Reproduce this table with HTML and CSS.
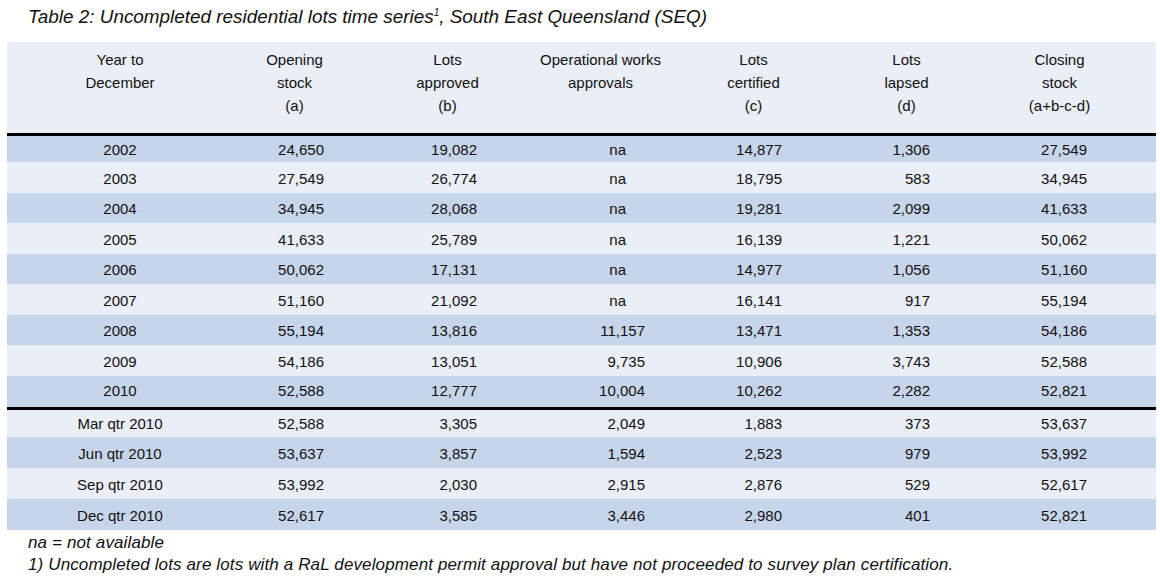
FILE: index.html
```html
<!DOCTYPE html>
<html>
<head>
<meta charset="utf-8">
<link rel="stylesheet" href="styles.css">
</head>
<body>
<div class="page">
  <p class="title">Table 2: Uncompleted residential lots time series<sup>1</sup>, South East Queensland (SEQ)</p>
  <table class="lots">
    <colgroup>
      <col class="c1"><col class="cn"><col class="cn"><col class="cn"><col class="cn"><col class="cn"><col class="c7">
    </colgroup>
    <thead>
      <tr>
        <th>Year to<br>December</th>
        <th>Opening<br>stock<br>(a)</th>
        <th>Lots<br>approved<br>(b)</th>
        <th>Operational works<br>approvals</th>
        <th>Lots<br>certified<br>(c)</th>
        <th>Lots<br>lapsed<br>(d)</th>
        <th>Closing<br>stock<br>(a+b-c-d)</th>
      </tr>
    </thead>
    <tbody>
      <tr class="dark first"><td>2002</td><td>24,650</td><td>19,082</td><td class="na">na</td><td>14,877</td><td>1,306</td><td>27,549</td></tr>
      <tr class="light"><td>2003</td><td>27,549</td><td>26,774</td><td class="na">na</td><td>18,795</td><td>583</td><td>34,945</td></tr>
      <tr class="dark"><td>2004</td><td>34,945</td><td>28,068</td><td class="na">na</td><td>19,281</td><td>2,099</td><td>41,633</td></tr>
      <tr class="light"><td>2005</td><td>41,633</td><td>25,789</td><td class="na">na</td><td>16,139</td><td>1,221</td><td>50,062</td></tr>
      <tr class="dark"><td>2006</td><td>50,062</td><td>17,131</td><td class="na">na</td><td>14,977</td><td>1,056</td><td>51,160</td></tr>
      <tr class="light"><td>2007</td><td>51,160</td><td>21,092</td><td class="na">na</td><td>16,141</td><td>917</td><td>55,194</td></tr>
      <tr class="dark"><td>2008</td><td>55,194</td><td>13,816</td><td>11,157</td><td>13,471</td><td>1,353</td><td>54,186</td></tr>
      <tr class="light"><td>2009</td><td>54,186</td><td>13,051</td><td>9,735</td><td>10,906</td><td>3,743</td><td>52,588</td></tr>
      <tr class="dark split"><td>2010</td><td>52,588</td><td>12,777</td><td>10,004</td><td>10,262</td><td>2,282</td><td>52,821</td></tr>
      <tr class="light after-split"><td>Mar qtr 2010</td><td>52,588</td><td>3,305</td><td>2,049</td><td>1,883</td><td>373</td><td>53,637</td></tr>
      <tr class="dark tall"><td>Jun qtr 2010</td><td>53,637</td><td>3,857</td><td>1,594</td><td>2,523</td><td>979</td><td>53,992</td></tr>
      <tr class="light"><td>Sep qtr 2010</td><td>53,992</td><td>2,030</td><td>2,915</td><td>2,876</td><td>529</td><td>52,617</td></tr>
      <tr class="dark tall"><td>Dec qtr 2010</td><td>52,617</td><td>3,585</td><td>3,446</td><td>2,980</td><td>401</td><td>52,821</td></tr>
    </tbody>
  </table>
  <p class="note first-note">na = not available</p>
  <p class="note">1) Uncompleted lots are lots with a RaL development permit approval but have not proceeded to survey plan certification.</p>
</div>
</body>
</html>
```

FILE: styles.css
```css
html, body {
  margin: 0;
  padding: 0;
  background: #ffffff;
}

.page {
  padding: 0 4px 0 7px;
  font-family: "Liberation Sans", Arial, sans-serif;
  color: #111111;
}

.title {
  margin: 0;
  padding: 6px 0 0 21px;
  height: 42px;
  box-sizing: border-box;
  font-size: 18.9px;
  font-style: italic;
  line-height: 22px;
}

.title sup {
  font-size: 10px;
  line-height: 0;
  vertical-align: 7px;
}

.lots {
  width: 1149px;
  border-collapse: collapse;
  table-layout: fixed;
  font-size: 15px;
}

.c1 { width: 211px; }
.cn { width: 153px; }
.c7 { width: 173px; }

.lots thead th {
  background: #e9eef7;
  font-weight: normal;
  vertical-align: top;
  text-align: center;
  line-height: 23px;
  height: 92px;
  box-sizing: border-box;
  padding: 6px 0 0 0;
  border-bottom: 3px solid #000000;
}

.lots thead th:first-child {
  padding-left: 15px;
}

.lots thead th:last-child {
  padding-right: 20px;
}

.lots tr { height: 30px; }
.lots tbody tr:nth-child(even) { height: 31px; }
.lots tbody tr.first { height: 28px; }
.lots tbody tr.split { height: 32px; }
.lots tbody tr.after-split { height: 29px; }
.lots tbody tr.tall { height: 31px; }

.lots td {
  padding: 2px 47px 0 0;
  text-align: right;
  line-height: 18px;
  vertical-align: middle;
}

.lots tr.split td {
  padding-top: 0;
}

.lots td:first-child {
  text-align: center;
  padding-right: 0;
  padding-left: 15px;
}

.lots td:nth-child(4) { padding-right: 32px; }
.lots td:nth-child(5) { padding-right: 48px; }
.lots td:nth-child(6) { padding-right: 53px; }
.lots td:nth-child(7) { padding-right: 69px; }
.lots td.na { padding-right: 51px; }

.lots tr.dark td { background: #c7d5eb; }
.lots tr.light td { background: #e9eef7; }

.lots tr.split td {
  border-bottom: 3px solid #000000;
}

.note {
  margin: 0;
  padding-left: 21px;
  font-size: 17px;
  font-style: italic;
  line-height: 22px;
  letter-spacing: 0.13px;
}

.first-note {
  margin-top: 2px;
}
```
